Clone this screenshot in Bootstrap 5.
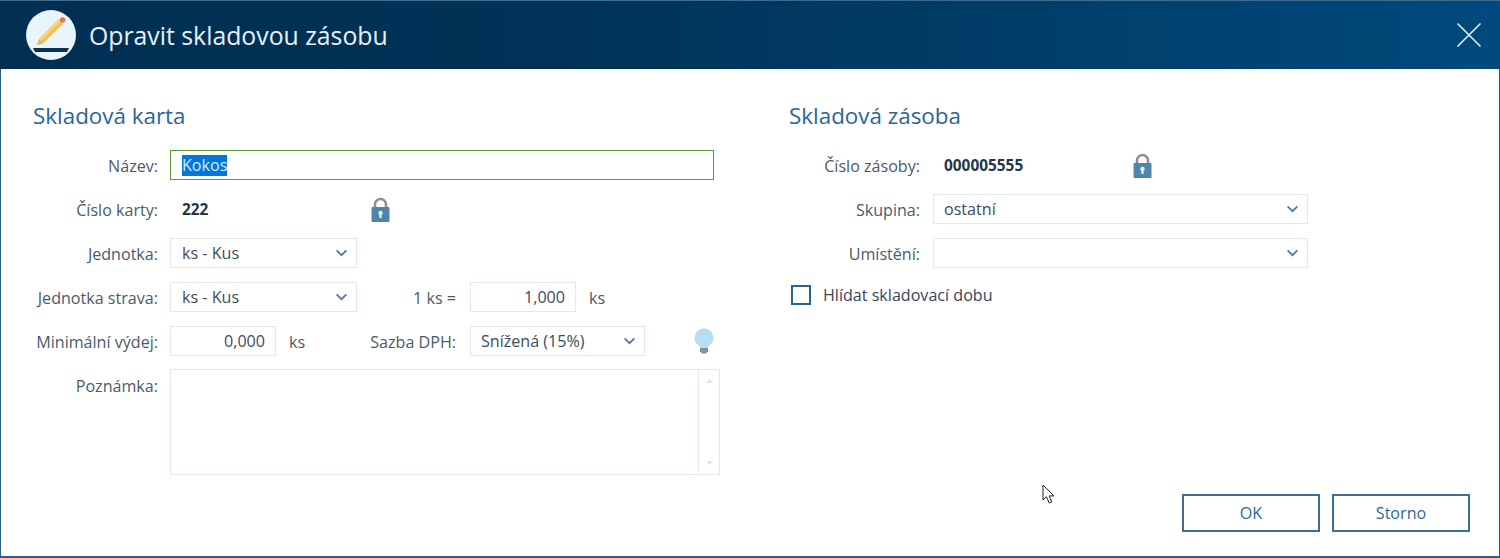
<!DOCTYPE html>
<html lang="cs">
<head>
<meta charset="utf-8">
<title>Opravit skladovou zásobu</title>
<link href="https://cdn.jsdelivr.net/npm/bootstrap@5.3.0/dist/css/bootstrap.min.css" rel="stylesheet">
<style>
html,body{height:558px;overflow:hidden;background:#fff}
body{font-family:"Open Sans",sans-serif;font-size:16.1px;color:#35465a}
.dlg{height:558px;border:1px solid #2b5f87;border-bottom-width:2px;position:relative;background:#fff}
.dlg-head{height:69px;background:linear-gradient(90deg,#002f52 0%,#003358 40%,#004a7d 100%);padding-left:25px;color:#e9f3fb;border-top:1px solid #3c6c90;margin:-1px -1px 0;flex:none}
.dlg-title{font-size:24.8px;margin:0 0 0 12px;padding-top:1px;font-weight:400;line-height:1;color:#e6f1f9}
.dlg-close{background:none;border:0;padding:0;margin-right:18px;line-height:0}
.dlg-body{padding:32px 0 0 32px}
.pane-l{width:688px;flex:none}
.pane-r{margin-left:68px;width:520px;flex:none}
.pane-h{font-size:22.4px;font-weight:400;color:#2b6696;line-height:28px;margin:0 0 20px;padding-top:1px}
.frow{height:30px;margin-bottom:14px}
.lbl{width:125px;flex:none;text-align:right;white-space:nowrap;color:#4a5a6c;margin:0 12px 0 0;padding-top:2px}
.pane-r .lbl{width:131px;margin-right:13px}
.form-control.fld,.form-select.fld{height:30px;min-height:30px;border:1px solid #dfe8f3;border-radius:0;font-size:16.1px;color:#3d4c5c;padding:0 11px;box-shadow:none;line-height:28px;font-family:inherit}
.form-select.fld{background-image:url("data:image/svg+xml,%3csvg xmlns='http://www.w3.org/2000/svg' viewBox='0 0 14 9'%3e%3cpath fill='none' stroke='%234f7ba3' stroke-width='2' d='M1.5 1.5l5.5 5.5 5.5-5.5'/%3e%3c/svg%3e");background-size:13px 8px;background-position:right 8px center;padding-right:28px}
.form-control.act{border:1px solid #5b9a35;width:544px;display:flex;align-items:center}
.form-select.fld.tight{padding-left:10px}
.sel{background:#0078d7;color:#d8ecfb;line-height:21px}
.w-187{width:187px}
.w-106{width:106px}
.w-175{width:175px}
.w-375{width:375px}
.form-control.fld.num{text-align:right;padding-right:10px}
.val{font-weight:700;color:#23354a;font-size:15.4px;width:189px;flex:none;margin-left:12px;padding-top:2px}
.pane-r .val{margin-left:11px}
.midcol{width:286px;flex:none}
.midlbl{margin-left:auto;padding-top:2px;white-space:nowrap;color:#4a5a6c}
.unit{margin-left:13px;padding-top:2px;color:#4a5a6c}
.gap14{margin-left:14px}
.bulb{margin-left:49px}
.noterow{margin-top:-1px}
.pane-l .lbl.lbl-top{padding-top:5px}
.note-wrap{width:550px;height:106px;border:1px solid #dfe8f3}
.note-ta{border:0;resize:none;outline:0;height:100%;background:#fff}
.sbar{width:21px;border-left:1px solid #dfe8f3;flex:none;padding:9px 0}
.chkrow{margin-top:-2px}
.chk{width:20px;height:20px;border:2px solid #2b6390;background:#fff;margin:0 12px 0 2px;flex:none;border-radius:0;appearance:none}
.dlg-foot{padding:0 29px 24px 0;gap:12px}
.btn.act-btn{width:138px;height:38px;border:2px solid #3a6f99;border-radius:0;color:#2f6a9a;background:#fff;font-size:16.1px;padding:1px 0 0;box-shadow:none;line-height:1}
.cur{position:absolute;left:1041px;top:483px;line-height:0}
</style>
</head>
<body class="m-0">
<div class="dlg d-flex flex-column">
  <header class="dlg-head d-flex align-items-center">
    <svg width="52" height="52" viewBox="0 0 52 52" aria-hidden="true"><circle cx="26" cy="26" r="25" fill="#e9f4fb"/><path d="M8 39h36l-2 4H10z" fill="#0b3152"/><path d="M12 36l2-6L33 10.500l5 4.500L18 34.500z" fill="#f5c04f"/><path d="M14 30L33 10.500l2.200 2L16.200 32z" fill="#f9d27a"/><path d="M12 36l2-6 4 4.500z" fill="#d9b98a"/><circle cx="37.500" cy="11" r="2.800" fill="#ee6a62"/></svg>
    <h1 class="dlg-title flex-grow-1">Opravit skladovou zásobu</h1>
    <button class="dlg-close" type="button" aria-label="Zavřít"><svg width="26" height="26" viewBox="0 0 26 26"><path d="M1.500 1.500l23 23M24.500 1.500l-23 23" stroke="#e8eff5" stroke-width="1.600" fill="none"/></svg></button>
  </header>
  <main class="dlg-body d-flex flex-grow-1">
    <section class="pane-l">
      <h2 class="pane-h">Skladová karta</h2>
      <div class="frow d-flex align-items-center"><label class="lbl">Název:</label><div class="form-control fld act"><span class="sel">Kokos</span></div></div>
      <div class="frow d-flex align-items-center"><span class="lbl">Číslo karty:</span><span class="val">222</span>
        <svg width="19" height="25" viewBox="0 0 19 25" aria-hidden="true"><path d="M4 11V7.500a5.500 5.500 0 0 1 11 0V11" fill="none" stroke="#8f8a9e" stroke-width="2.600"/><rect x="0.500" y="10" width="18" height="15" rx="1" fill="#4d86ad"/><circle cx="9.500" cy="16" r="2.200" fill="#e8f2f8"/><rect x="8.400" y="16" width="2.200" height="5" fill="#e8f2f8"/></svg>
      </div>
      <div class="frow d-flex align-items-center"><label class="lbl">Jednotka:</label><select class="form-select fld w-187"><option>ks - Kus</option></select></div>
      <div class="frow d-flex align-items-center"><label class="lbl">Jednotka strava:</label>
        <div class="midcol d-flex align-items-center"><select class="form-select fld w-187"><option>ks - Kus</option></select><span class="midlbl">1 ks =</span></div>
        <input class="form-control fld num w-106 gap14" value="1,000" aria-label="1 ks ="><span class="unit">ks</span>
      </div>
      <div class="frow d-flex align-items-center"><label class="lbl">Minimální výdej:</label>
        <div class="midcol d-flex align-items-center"><input class="form-control fld num w-106" value="0,000"><span class="unit">ks</span><span class="midlbl">Sazba DPH:</span></div>
        <select class="form-select fld tight w-175 gap14"><option>Snížená (15%)</option></select>
        <svg class="bulb" width="20" height="26" viewBox="0 0 20 26" aria-hidden="true"><path d="M10 .5a9.300 9.300 0 0 0-5.500 16.800c1 .9 1.300 1.800 1.300 2.700h8.400c0-.9.300-1.800 1.300-2.700A9.300 9.300 0 0 0 10 .5z" fill="#b5def5"/><path d="M6 20h8v3.500l-2 2H8l-2-2z" fill="#8d8c9a"/></svg>
      </div>
      <div class="noterow d-flex"><label class="lbl lbl-top">Poznámka:</label>
        <div class="note-wrap d-flex"><textarea class="form-control note-ta flex-grow-1 rounded-0 shadow-none" aria-label="Poznámka"></textarea>
          <div class="sbar d-flex flex-column justify-content-between align-items-center">
            <svg width="7" height="4" viewBox="0 0 9 5"><path d="M4.500 0L9 5H0z" fill="#dfe3e8"/></svg>
            <svg width="7" height="4" viewBox="0 0 9 5"><path d="M4.500 5L9 0H0z" fill="#dfe3e8"/></svg>
          </div>
        </div>
      </div>
    </section>
    <section class="pane-r">
      <h2 class="pane-h">Skladová zásoba</h2>
      <div class="frow d-flex align-items-center"><span class="lbl">Číslo zásoby:</span><span class="val">000005555</span>
        <svg width="19" height="25" viewBox="0 0 19 25" aria-hidden="true"><path d="M4 11V7.500a5.500 5.500 0 0 1 11 0V11" fill="none" stroke="#8f8a9e" stroke-width="2.600"/><rect x="0.500" y="10" width="18" height="15" rx="1" fill="#4d86ad"/><circle cx="9.500" cy="16" r="2.200" fill="#e8f2f8"/><rect x="8.400" y="16" width="2.200" height="5" fill="#e8f2f8"/></svg>
      </div>
      <div class="frow d-flex align-items-center"><label class="lbl">Skupina:</label><select class="form-select fld tight w-375"><option>ostatní</option></select></div>
      <div class="frow d-flex align-items-center"><label class="lbl">Umístění:</label><select class="form-select fld tight w-375"><option></option></select></div>
      <div class="frow chkrow d-flex align-items-center"><input type="checkbox" class="chk" id="hl"><label for="hl">Hlídat skladovací dobu</label></div>
    </section>
  </main>
  <footer class="dlg-foot d-flex justify-content-end">
    <button type="button" class="btn act-btn">OK</button>
    <button type="button" class="btn act-btn">Storno</button>
  </footer>
  <svg class="cur" width="14" height="20" viewBox="0 0 14 20" aria-hidden="true"><path d="M1 1v15l3.500-3.300L7.200 19l2.600-1.100L7.200 11.900H12z" fill="#fff" stroke="#222" stroke-width="1"/></svg>
</div>
</body>
</html>
